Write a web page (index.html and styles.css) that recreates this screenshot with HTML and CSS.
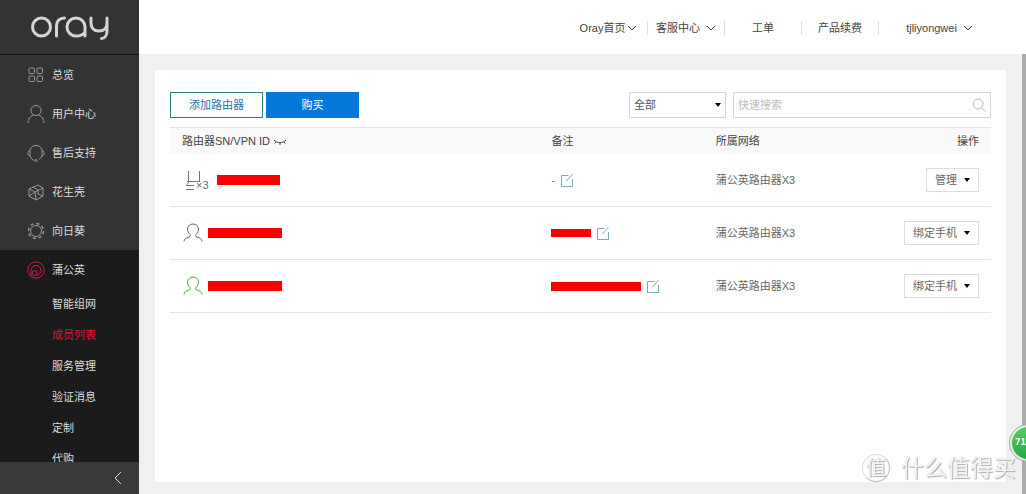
FILE: index.html
```html
<!DOCTYPE html>
<html lang="zh-CN">
<head>
<meta charset="utf-8">
<title>Oray - 成员列表</title>
<link rel="stylesheet" href="styles.css">
</head>
<body>
<svg class="defs" aria-hidden="true">
  <symbol id="chevron" viewBox="0 0 10 8"><path d="M1 2l4 4 4-4"/></symbol>
  <symbol id="edit" viewBox="0 0 14 14"><path d="M8.500 2.500h-7v11h11V6M6.500 8l6-7"/></symbol>
  <symbol id="person" viewBox="0 0 20 20"><path d="M1 18.500c0-2.500 2-3.500 5-4.500 1.800-.6 2-1.500 1-2.500C5.500 10 4.500 8 4.500 6a5.500 5 0 0 1 11 0c0 2-1 4-2.500 5.500-1 1-.8 1.900 1 2.500 3 1 5 2 5 4.500"/></symbol>
</svg>
<div class="app">
  <aside class="sidebar">
    <a class="brand" href="#" aria-label="oray">
      <svg class="logo" viewBox="0 0 80 28" aria-hidden="true">
        <circle cx="11.500" cy="13" r="9"/>
        <path d="M26.500 22V12c0-5 3-8 8-8"/>
        <path d="M55 22V13a9 9 0 1 0-9 9c4 0 7-1 9-4"/>
        <path d="M61 4v5c0 5 3 8 8 8s8-3 8-8V4M77 9v8c0 4-2 7.500-5.500 7.500"/>
      </svg>
    </a>
    <nav class="menu">
      <a class="item" href="#"><svg class="ico" viewBox="0 0 18 18"><rect x="2" y="2" width="5.500" height="5.500" rx="1"/><rect x="10" y="2" width="5.500" height="5.500" rx="1"/><rect x="2" y="10" width="5.500" height="5.500" rx="1"/><rect x="10" y="10" width="5.500" height="5.500" rx="1"/></svg>总览</a>
      <a class="item" href="#"><svg class="ico" viewBox="0 0 18 18"><circle cx="9" cy="5.500" r="5"/><path d="M1 18c0-4 2-6.500 5.500-8M17 18c0-4-2-6.500-5.500-8"/></svg>用户中心</a>
      <a class="item" href="#"><svg class="ico" viewBox="0 0 18 18"><path d="M3 6C4 3 6 1.500 9 1.500S14 3 15 6M3 6v6M15 6v6M3 6.500c-3 .5-3 5 0 5.500M15 6.500c3 .5 3 5 0 5.500M3 12c1 2.500 2.500 4 4.500 4.500M15 12c-.5 1.500-1.500 2.500-3 3"/><circle cx="9" cy="16.500" r="1"/></svg>售后支持</a>
      <a class="item" href="#"><svg class="ico" viewBox="0 0 18 18"><path d="M2 6l9-4 5 3v8l-7 4-7-4zM2 6l6 3 8-4M8 9l1 8M6 4l5 3v4l5 2M8 9l-6 4"/></svg>花生壳</a>
      <a class="item" href="#"><svg class="ico" viewBox="0 0 18 18"><circle cx="9" cy="9" r="5.500"/><circle cx="9" cy="9" r="7.500" stroke-width="1.500" stroke-dasharray="3.200 2.690"/></svg>向日葵</a>
      <div class="group">
        <a class="item" href="#"><svg class="ico red" viewBox="0 0 18 18"><circle cx="9" cy="9" r="8.200"/><path d="M4 15V9.500a5 5 0 1 1 6 4.800"/><circle cx="7.500" cy="12" r="2.500"/></svg>蒲公英</a>
        <a class="sub" href="#">智能组网</a>
        <a class="sub current" href="#">成员列表</a>
        <a class="sub" href="#">服务管理</a>
        <a class="sub" href="#">验证消息</a>
        <a class="sub" href="#">定制</a>
        <a class="sub" href="#">代购</a>
      </div>
    </nav>
    <button class="collapse" type="button" aria-label="收起"><svg viewBox="0 0 10 14"><path d="M8 1L2 7l6 6"/></svg></button>
  </aside>
  <div class="content">
    <header class="topbar">
      <a class="link" href="#">Oray首页<svg class="chev"><use href="#chevron"/></svg></a>
      <a class="link wide" href="#">客服中心<svg class="chev"><use href="#chevron"/></svg></a>
      <a class="link" href="#">工单</a>
      <a class="link" href="#">产品续费</a>
      <a class="link wide user" href="#">tjliyongwei<svg class="chev"><use href="#chevron"/></svg></a>
    </header>
    <main class="main">
      <section class="panel">
        <div class="tools">
          <button class="btn" type="button">添加路由器</button>
          <button class="btn primary" type="button">购买</button>
          <div class="filter"><select aria-label="筛选"><option>全部</option></select></div>
          <div class="search">
            <input type="text" placeholder="快速搜索" aria-label="快速搜索">
            <button class="find" type="button" aria-label="搜索"><svg viewBox="0 0 14 14"><circle cx="6" cy="6" r="5"/><path d="M9.500 10l4 3.500"/></svg></button>
          </div>
        </div>
        <table class="list">
          <thead>
            <tr><th class="c-id">路由器SN/VPN ID <svg class="lash" viewBox="0 0 14 8"><path d="M1 2c3 3.500 9 3.500 12 0M3 4L1.500 5.500M7 5v2M11 4l1.500 1.500"/></svg></th><th class="c-note">备注</th><th class="c-net">所属网络</th><th class="c-op">操作</th></tr>
          </thead>
          <tbody>
            <tr>
              <td><div class="cell"><span class="router"><svg viewBox="0 0 18 20"><path d="M4.500 1v10.500M15.500 1v10.500M3 11.500h13M5 11.500L2.500 15.500H10M2 19.500h8"/></svg>×3</span><span class="mask m-a"></span></div></td>
              <td><div class="cell note">-<svg class="edit"><use href="#edit"/></svg></div></td>
              <td>蒲公英路由器X3</td>
              <td class="op"><button class="drop" type="button">管理</button></td>
            </tr>
            <tr>
              <td><div class="cell"><svg class="person"><use href="#person"/></svg><span class="mask m-b"></span></div></td>
              <td><div class="cell note"><span class="mask m-c"></span><svg class="edit"><use href="#edit"/></svg></div></td>
              <td>蒲公英路由器X3</td>
              <td class="op"><button class="drop" type="button">绑定手机</button></td>
            </tr>
            <tr>
              <td><div class="cell"><svg class="person online"><use href="#person"/></svg><span class="mask m-b"></span></div></td>
              <td><div class="cell note"><span class="mask m-d"></span><svg class="edit"><use href="#edit"/></svg></div></td>
              <td>蒲公英路由器X3</td>
              <td class="op"><button class="drop" type="button">绑定手机</button></td>
            </tr>
          </tbody>
        </table>
      </section>
    </main>
  </div>
</div>
<div class="scrollbar"></div>
<div class="badge">71</div>
<div class="watermark"><span class="seal">值</span>什么值得买</div>
</body>
</html>
```

FILE: styles.css
```css
* { box-sizing: border-box; }
body {
  margin: 0;
  font: 11px/16px "Liberation Sans", "Noto Sans CJK SC", sans-serif;
  color: #666;
  background: #f0f0f0;
}
a { color: inherit; text-decoration: none; }
svg { fill: none; stroke: currentColor; flex: none; }
button, input, select { font: inherit; color: inherit; }
.defs { position: absolute; width: 0; height: 0; }

.app { display: flex; height: 100vh; }

.sidebar {
  display: flex;
  flex-direction: column;
  flex: none;
  width: 139px;
  background: #333;
  color: #ddd;
}
.brand {
  flex: none;
  height: 55px;
  padding: 14px 0 0 30px;
  border-bottom: 1px solid #111;
}
.logo { display: block; width: 80px; height: 28px; color: #d4d4d4; stroke-width: 3; stroke-linecap: round; }
.menu { flex: 1; min-height: 0; overflow: hidden; }
.item { display: flex; align-items: center; gap: 7px; height: 39px; padding-left: 27px; }
.ico { width: 18px; height: 18px; color: #999; overflow: visible; }
.ico.red { color: #c81e46; }
.group { background: #1b1b1b; }
.sub { display: block; padding-left: 52px; line-height: 31px; }
.sub.current { color: #e0103c; }
.collapse {
  display: flex;
  align-items: center;
  justify-content: flex-end;
  flex: none;
  height: 32px;
  padding: 0 16px;
  border: 0;
  background: #3a3a3a;
}
.collapse svg { width: 10px; height: 14px; }

.content { display: flex; flex-direction: column; flex: 1; min-width: 0; }
.topbar {
  display: flex;
  justify-content: flex-end;
  align-items: center;
  flex: none;
  height: 54px;
  padding: 2px 26px 0 0;
  background: #fff;
  color: #444;
}
.link { display: flex; align-items: center; justify-content: center; gap: 2px; min-width: 77px; height: 14px; }
.link + .link { border-left: 1px solid #ddd; }
.wide { gap: 6px; }
.user { min-width: 122px; }
.chev { width: 10px; height: 8px; }

.main { flex: 1; padding: 16px 20px 12px 16px; }
.panel { height: 100%; padding: 22px 15px; background: #fff; }
.tools { display: flex; gap: 3px; padding-bottom: 9px; }
.btn { width: 93px; height: 26px; padding: 0; border: 1px solid #2f8085; background: #fff; color: #1a74a8; }
.btn.primary { border-color: #0678d8; background: #0678d8; color: #fff; }
.filter { position: relative; width: 97px; margin: 0 4px 0 auto; }
.filter select {
  width: 100%;
  height: 26px;
  padding: 0 4px;
  border: 1px solid #d6d6d6;
  border-radius: 0;
  background: #fff;
  color: #555;
  appearance: none;
}
.filter::after {
  content: "";
  position: absolute;
  top: 11px;
  right: 5px;
  border: 3px solid transparent;
  border-top: 4px solid #000;
  border-bottom: 0;
}
.search { display: flex; align-items: center; width: 258px; height: 26px; border: 1px solid #d6d6d6; }
.search input { flex: 1; min-width: 0; padding: 0 4px; border: 0; outline: 0; background: none; }
.search input::placeholder { color: #bbb; opacity: 1; }
.find { padding: 0 4px; border: 0; background: none; color: #bbb; }
.find svg { display: block; width: 14px; height: 14px; }

.list { width: 100%; table-layout: fixed; border-collapse: collapse; }
.list th { height: 26px; padding: 0 12px; border-top: 1px solid #e4e4e4; background: #f9f9f9; color: #444; font-weight: 400; text-align: left; }
.list td { height: 53px; padding: 0 12px; border-bottom: 1px solid #e4e4e4; }
.c-id { width: 45%; }
.c-note, .c-net { width: 20%; }
.c-op { width: 15%; }
.list .c-op, .list .op { text-align: right; }
.lash { width: 14px; height: 8px; vertical-align: -1px; }
.cell { display: flex; align-items: center; gap: 5px; }
.router { display: flex; align-items: flex-end; width: 30px; padding-left: 2px; line-height: 10px; }
.router svg { width: 18px; height: 20px; margin-right: -6px; color: #777; }
.person { width: 20px; height: 20px; margin-left: 1px; }
.online { color: #4aa83c; }
.edit { width: 14px; height: 14px; color: #7fa9b8; }
.mask { height: 10px; background: #fa0000; }
.m-a { width: 63px; }
.m-b { width: 74px; }
.m-c { width: 40px; height: 8px; }
.m-d { width: 90px; height: 9px; }
.drop { display: inline-flex; align-items: center; gap: 7px; height: 24px; padding: 0 8px; border: 1px solid #ddd; background: #fff; }
.drop::after { content: ""; border: 3px solid transparent; border-top: 4px solid #000; border-bottom: 0; }

.scrollbar { position: fixed; top: 54px; right: 0; bottom: 0; width: 4px; background: #aaa; }
.badge {
  position: fixed;
  right: -20px;
  bottom: 33px;
  width: 36px;
  height: 36px;
  padding-left: 3px;
  border: 2px solid #dff0df;
  border-radius: 50%;
  outline: 1px solid #aaa;
  background: linear-gradient(#55cc66, #22aa44);
  color: #fff;
  font: bold 8px/32px "DejaVu Sans", sans-serif;
}
.watermark {
  position: fixed;
  right: 10px;
  bottom: 11px;
  display: flex;
  align-items: center;
  gap: 11px;
  color: #f4f4f4;
  font-size: 23px;
  line-height: 30px;
  text-shadow: 1px 1px 1px #aaa, 0 0 1px #ccc;
}
.seal { width: 28px; height: 28px; border: 1px solid #ddd; border-right-color: #bbb; border-bottom-color: #bbb; border-radius: 50%; font-size: 20px; line-height: 26px; text-align: center; }
```
